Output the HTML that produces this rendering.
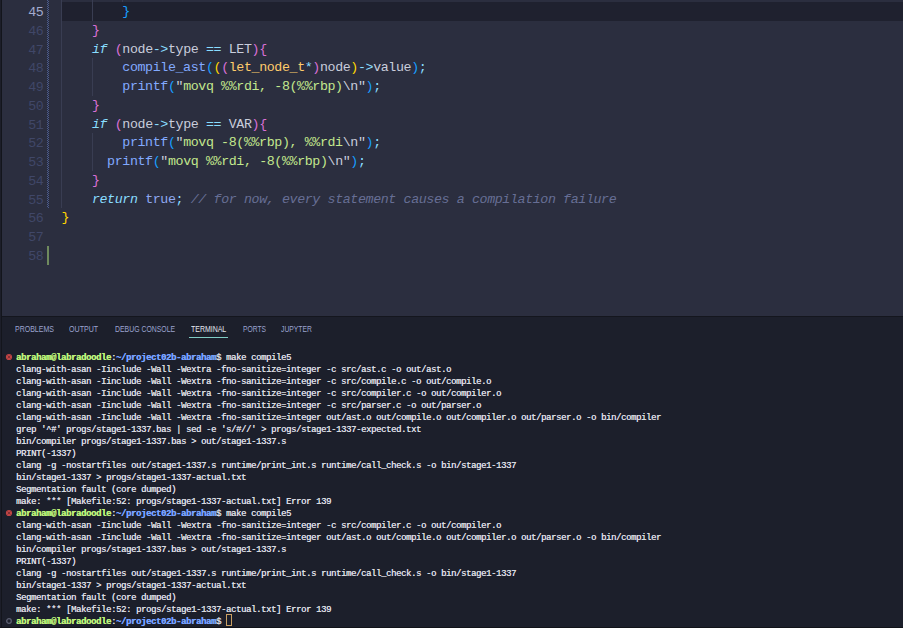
<!DOCTYPE html>
<html><head><meta charset="utf-8">
<style>
html,body{margin:0;padding:0;width:903px;height:628px;overflow:hidden;background:#2b2e3f;}
#strip{position:absolute;left:0;top:0;width:2px;height:628px;background:linear-gradient(to right,#1c1e29 0 1px,#13151c 1px 2px);}
#editor{position:absolute;left:2px;top:0;width:901px;height:316px;background:#2b2e3f;overflow:hidden;}
#border{position:absolute;left:2px;top:316px;width:901px;height:1px;background:#14161e;}
#panel{position:absolute;left:2px;top:317px;width:901px;height:311px;background:#1c1f2b;overflow:hidden;}
.ln{position:absolute;left:0;width:41.5px;text-align:right;font-family:"Liberation Mono",monospace;font-size:13.3px;letter-spacing:-0.3px;line-height:18.75px;height:18.75px;color:#404768;transform:translateY(1.5px);}
.ln.act{color:#a3abcf;}
.cl{position:absolute;left:59.5px;white-space:pre;font-family:"Liberation Mono",monospace;font-size:13.3px;letter-spacing:-0.38px;line-height:18.75px;height:18.75px;color:#c9cddc;transform:translateY(1px);}
.hl{position:absolute;left:60px;width:841px;background:#1f212f;}
.guide{position:absolute;width:1px;background:#393d52;}
.gutterdots{position:absolute;left:45px;width:2px;}
.k{color:#89ddff;font-style:italic;}
.f{color:#82aaff;}
.o{color:#89ddff;}
.t{color:#ffcb6b;}
.s{color:#c3e88d;}
.c{color:#676e95;font-style:italic;}
.b1{color:#ffd700;}
.b2{color:#da70d6;}
.b3{color:#179fff;}
.tv{color:#8fa8f0;}
.tab{position:absolute;top:8.4px;transform-origin:0 0;font-family:"Liberation Sans",sans-serif;font-size:8.2px;color:#9ba3cf;white-space:nowrap;}
.tab.act{color:#e4e6ee;}
.tl{position:absolute;left:14px;margin-top:-1px;white-space:pre;font-family:"Liberation Mono",monospace;font-size:9px;letter-spacing:-0.4px;line-height:12px;height:12px;color:#dcdde0;text-shadow:0.25px 0 0 currentColor;}
.pu{color:#bff37a;font-weight:bold;}
.pp{color:#78a3ff;font-weight:bold;}
.ico{position:absolute;left:3.1px;}
#cur{position:absolute;left:223.6px;top:296.6px;width:6px;height:12.4px;border:1px solid #c9a064;box-sizing:border-box;}
#uline{position:absolute;left:187px;top:20px;width:39px;height:1px;background:#80cbc4;}
</style></head><body>
<div id="strip"></div>
<div id="editor">
  <div class="hl" style="top:2px;height:18.75px;"></div>
  <div class="guide" style="left:59px;top:0;height:208px;"></div>
  <div class="guide" style="left:90px;top:0;height:21px;"></div>
  <div class="guide" style="left:90px;top:58px;height:38px;"></div>
  <div class="guide" style="left:90px;top:133px;height:38px;"></div>
  <div class="guide" style="left:120px;top:0;height:2px;"></div>
  <div class="gutterdots" style="left:45px;top:0;height:208px;background:repeating-linear-gradient(to bottom,#4c5c8e 0 1px,transparent 1px 2px);width:1px;"></div>
  <div class="gutterdots" style="left:46px;top:0;height:208px;background:repeating-linear-gradient(to bottom,transparent 0 1px,#4c5c8e 1px 2px);width:1px;"></div>
  <div class="gutterdots" style="top:246px;height:19px;background:#6f8a5e;"></div>

  <div class="ln act" style="top:2px">45</div>
  <div class="ln" style="top:20.75px">46</div>
  <div class="ln" style="top:39.5px">47</div>
  <div class="ln" style="top:58.25px">48</div>
  <div class="ln" style="top:77px">49</div>
  <div class="ln" style="top:95.75px">50</div>
  <div class="ln" style="top:114.5px">51</div>
  <div class="ln" style="top:133.25px">52</div>
  <div class="ln" style="top:152px">53</div>
  <div class="ln" style="top:170.75px">54</div>
  <div class="ln" style="top:189.5px">55</div>
  <div class="ln" style="top:208.25px">56</div>
  <div class="ln" style="top:227px">57</div>
  <div class="ln" style="top:245.75px">58</div>

  <div class="cl" style="top:2px">        <span class="b3">}</span></div>
  <div class="cl" style="top:20.75px">    <span class="b2">}</span></div>
  <div class="cl" style="top:39.5px">    <span class="k">if</span> <span class="b2">(</span>node<span class="o">-&gt;</span>type <span class="o">==</span> LET<span class="b2">)</span><span class="b2">{</span></div>
  <div class="cl" style="top:58.25px">        <span class="f">compile_ast</span><span class="b3">(</span><span class="b1">(</span><span class="b2">(</span><span class="t">let_node_t</span><span class="o">*</span><span class="b2">)</span>node<span class="b1">)</span><span class="o">-&gt;</span>value<span class="b3">)</span><span class="o">;</span></div>
  <div class="cl" style="top:77px">        <span class="f">printf</span><span class="b3">(</span>"<span class="s">movq %%rdi, -8(%%rbp)</span>\n"<span class="b3">)</span><span class="o">;</span></div>
  <div class="cl" style="top:95.75px">    <span class="b2">}</span></div>
  <div class="cl" style="top:114.5px">    <span class="k">if</span> <span class="b2">(</span>node<span class="o">-&gt;</span>type <span class="o">==</span> VAR<span class="b2">)</span><span class="b2">{</span></div>
  <div class="cl" style="top:133.25px">        <span class="f">printf</span><span class="b3">(</span>"<span class="s">movq -8(%%rbp), %%rdi</span>\n"<span class="b3">)</span><span class="o">;</span></div>
  <div class="cl" style="top:152px">      <span class="f">printf</span><span class="b3">(</span>"<span class="s">movq %%rdi, -8(%%rbp)</span>\n"<span class="b3">)</span><span class="o">;</span></div>
  <div class="cl" style="top:170.75px">    <span class="b2">}</span></div>
  <div class="cl" style="top:189.5px">    <span class="k">return</span> <span class="tv">true</span><span class="o">;</span> <span class="c">// for now, every statement causes a compilation failure</span></div>
  <div class="cl" style="top:208.25px"><span class="b1">}</span></div>
</div>
<div id="border"></div>
<div style="position:absolute;left:0;top:627px;width:903px;height:1px;background:#111319;z-index:5"></div>
<div id="panel">
  <div class="tab" style="left:13px;transform:scaleX(0.855)">PROBLEMS</div>
  <div class="tab" style="left:67px;transform:scaleX(0.867)">OUTPUT</div>
  <div class="tab" style="left:113px;transform:scaleX(0.842)">DEBUG CONSOLE</div>
  <div class="tab act" style="left:189px;transform:scaleX(0.851)">TERMINAL</div>
  <div class="tab" style="left:241px;transform:scaleX(0.82)">PORTS</div>
  <div class="tab" style="left:279px;transform:scaleX(0.825)">JUPYTER</div>
  <div id="uline"></div>
  <div id="cur"></div>
  <svg class="ico" style="top:35.8px" width="8" height="8" viewBox="0 0 8 8"><circle cx="4" cy="4" r="3.1" fill="#c04545"/><path d="M2.6 2.6L5.4 5.4M5.4 2.6L2.6 5.4" stroke="#7a2c32" stroke-width="0.9"/></svg>
  <div class="tl" style="top:36px"><span class="pu">abraham@labradoodle</span>:<span class="pp">~/project02b-abraham</span>$ make compile5</div>
  <div class="tl" style="top:48px">clang-with-asan -Iinclude -Wall -Wextra -fno-sanitize=integer -c src/ast.c -o out/ast.o</div>
  <div class="tl" style="top:60px">clang-with-asan -Iinclude -Wall -Wextra -fno-sanitize=integer -c src/compile.c -o out/compile.o</div>
  <div class="tl" style="top:72px">clang-with-asan -Iinclude -Wall -Wextra -fno-sanitize=integer -c src/compiler.c -o out/compiler.o</div>
  <div class="tl" style="top:84px">clang-with-asan -Iinclude -Wall -Wextra -fno-sanitize=integer -c src/parser.c -o out/parser.o</div>
  <div class="tl" style="top:96px">clang-with-asan -Iinclude -Wall -Wextra -fno-sanitize=integer out/ast.o out/compile.o out/compiler.o out/parser.o -o bin/compiler</div>
  <div class="tl" style="top:108px">grep '^#' progs/stage1-1337.bas | sed -e 's/#//' &gt; progs/stage1-1337-expected.txt</div>
  <div class="tl" style="top:120px">bin/compiler progs/stage1-1337.bas &gt; out/stage1-1337.s</div>
  <div class="tl" style="top:132px">PRINT(-1337)</div>
  <div class="tl" style="top:144px">clang -g -nostartfiles out/stage1-1337.s runtime/print_int.s runtime/call_check.s -o bin/stage1-1337</div>
  <div class="tl" style="top:156px">bin/stage1-1337 &gt; progs/stage1-1337-actual.txt</div>
  <div class="tl" style="top:168px">Segmentation fault (core dumped)</div>
  <div class="tl" style="top:180px">make: *** [Makefile:52: progs/stage1-1337-actual.txt] Error 139</div>
  <svg class="ico" style="top:191.8px" width="8" height="8" viewBox="0 0 8 8"><circle cx="4" cy="4" r="3.1" fill="#c04545"/><path d="M2.6 2.6L5.4 5.4M5.4 2.6L2.6 5.4" stroke="#7a2c32" stroke-width="0.9"/></svg>
  <div class="tl" style="top:192px"><span class="pu">abraham@labradoodle</span>:<span class="pp">~/project02b-abraham</span>$ make compile5</div>
  <div class="tl" style="top:204px">clang-with-asan -Iinclude -Wall -Wextra -fno-sanitize=integer -c src/compiler.c -o out/compiler.o</div>
  <div class="tl" style="top:216px">clang-with-asan -Iinclude -Wall -Wextra -fno-sanitize=integer out/ast.o out/compile.o out/compiler.o out/parser.o -o bin/compiler</div>
  <div class="tl" style="top:228px">bin/compiler progs/stage1-1337.bas &gt; out/stage1-1337.s</div>
  <div class="tl" style="top:240px">PRINT(-1337)</div>
  <div class="tl" style="top:252px">clang -g -nostartfiles out/stage1-1337.s runtime/print_int.s runtime/call_check.s -o bin/stage1-1337</div>
  <div class="tl" style="top:264px">bin/stage1-1337 &gt; progs/stage1-1337-actual.txt</div>
  <div class="tl" style="top:276px">Segmentation fault (core dumped)</div>
  <div class="tl" style="top:288px">make: *** [Makefile:52: progs/stage1-1337-actual.txt] Error 139</div>
  <svg class="ico" style="top:299.5px" width="8" height="8" viewBox="0 0 8 8"><circle cx="4" cy="4" r="2.3" fill="none" stroke="#5b5f72" stroke-width="1.3"/></svg>
  <div class="tl" style="top:300px"><span class="pu">abraham@labradoodle</span>:<span class="pp">~/project02b-abraham</span>$ </div>
</div>
</body></html>
